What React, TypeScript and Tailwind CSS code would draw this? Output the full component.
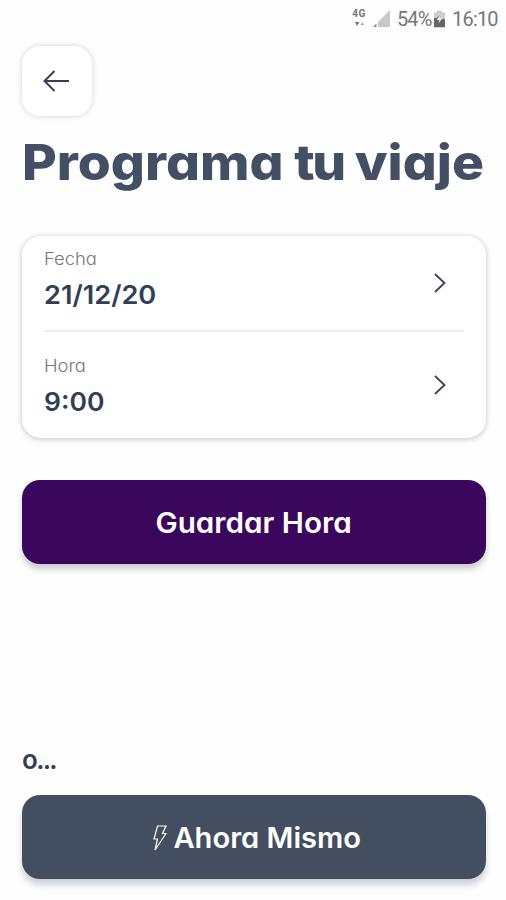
import type { ReactNode } from "react";

function StatusBar() {
  return (
    <header className="flex h-[37px] shrink-0 items-center justify-end pr-2 font-[Roboto,sans-serif] text-[20px] leading-5 text-[#777777]">
      <div className="mr-[6px] flex h-5 w-4 flex-col items-center">
        <span className="h-[10px] text-[10px] leading-[10px] font-bold tracking-[0.5px]">4G</span>
        <svg className="mt-px h-[7px] w-[11px]" viewBox="0 0 11 7" fill="currentColor">
          <path d="M1 2h4.5L3 6z" />
          <path d="M6.5 5H10L8.5 2z" opacity=".6" />
        </svg>
      </div>
      <svg className="mr-[7px] h-[18px] w-[17px]" viewBox="0 0 17 18">
        <path d="M17 0v17H5V12z" fill="#c8c8c8" />
        <path d="M3.5 13.5V17H0z" fill="#888888" />
      </svg>
      <span className="w-[35px] whitespace-nowrap tracking-[-0.9px]">54%</span>
      <svg className="mr-[7px] ml-[2px] h-[18px] w-[11px]" viewBox="0 0 12 18">
        <path d="M3 0h6v2h3v7H0V2h3z" fill="#cccccc" />
        <path d="M0 8h3l3-3v4h6v9H0z" fill="#666666" />
        <path d="M7 4l-4 6h3l-1 4 4-6H6z" fill="#ffffff" />
      </svg>
      <span className="w-[46px] whitespace-nowrap tracking-[-0.8px]">16:10</span>
    </header>
  );
}

function ChevronRight() {
  return (
    <svg className="h-5 w-3 shrink-0" viewBox="0 0 12 20" fill="none" stroke="#39435b" strokeWidth="1.8">
      <path d="M1 1l9.5 9L1 19" />
    </svg>
  );
}

function Field({ label, children, className }: { label: string; children: ReactNode; className: string }) {
  return (
    <div className={className}>
      <div className="self-start">
        <div className="origin-left scale-x-[1.08] text-[17px] leading-5 font-light text-[#737780]">{label}</div>
        <div className="mt-[10px] text-[26px] leading-8 font-semibold text-[#333e56]">{children}</div>
      </div>
      <ChevronRight />
    </div>
  );
}

export default function App() {
  return (
    <main className="flex h-[900px] w-[506px] flex-col overflow-hidden bg-[#fefefe] font-[Inter,sans-serif] text-[#434f63] [font-feature-settings:'cv11']">
      <StatusBar />
      <div className="flex flex-1 flex-col pr-5 pl-[22px]">
        <button aria-label="Volver" className="mt-[9px] flex size-[70px] items-center justify-center rounded-[18px] bg-white shadow-[0_0_5px_1px_rgba(0,0,0,0.13)]">
          <svg className="mr-[2px] h-[22px] w-[26px]" viewBox="0 0 26 22" fill="none" stroke="#343e57" strokeWidth="2">
            <path d="M11.5 1L1.5 11l10 10M1.5 11H26" />
          </svg>
        </button>
        <h1 className="mt-[17px] h-[60px] text-[49px] leading-[60px] font-extrabold whitespace-nowrap">
          <span className="inline-block origin-left scale-x-[1.09] [word-spacing:-1px]">Programa <span className="tracking-[-2px]">tu</span> viaje</span>
        </h1>
        <section className="mt-[43px] h-[202px] shrink-0 rounded-[19px] bg-white px-[22px] shadow-[0_1px_5px_1px_rgba(0,0,0,0.18)]">
          <Field label="Fecha" className="flex h-[96px] items-center justify-between border-b-2 border-[#eeeeee] pr-[18px] [&>div]:pt-[13px]">
            <span className="inline-block origin-left scale-x-[1.045]">21/12/20</span>
          </Field>
          <Field label="Hora" className="flex h-[106px] items-center justify-between pr-[18px] [&>div]:pt-[24px]">
            <span className="inline-block origin-left scale-x-[1.02]">9:00</span>
          </Field>
        </section>
        <button className="mt-[42px] h-[84px] shrink-0 rounded-[18px] bg-[#3b075c] pt-[2px] text-[28px] font-semibold text-white shadow-[0_5px_6px_rgba(0,0,0,0.2)]">
          <span className="inline-block scale-x-[1.06]">Guardar Hora</span>
        </button>
        <p className="mt-[180px] h-8 text-[26px] leading-8 font-semibold text-[#343e57]">
          <span className="tracking-[-1.7px]">o...</span>
        </p>
        <button className="mt-[19px] flex h-[84px] shrink-0 items-center justify-center rounded-[18px] bg-[#434f61] pt-[2px] pl-[2px] text-[28px] font-semibold text-white shadow-[0_6px_6px_rgba(67,79,97,0.25)]">
          <svg className="mr-[10px] h-[26px] w-[14px]" viewBox="0 0 14 26" fill="none" stroke="currentColor" strokeWidth="1.2">
            <path d="M4.5 1H13L9.5 8.5H13L2 25l2.5-11H1z" />
          </svg>
          <span className="inline-block scale-x-[1.04]">Ahora Mismo</span>
        </button>
      </div>
    </main>
  );
}
